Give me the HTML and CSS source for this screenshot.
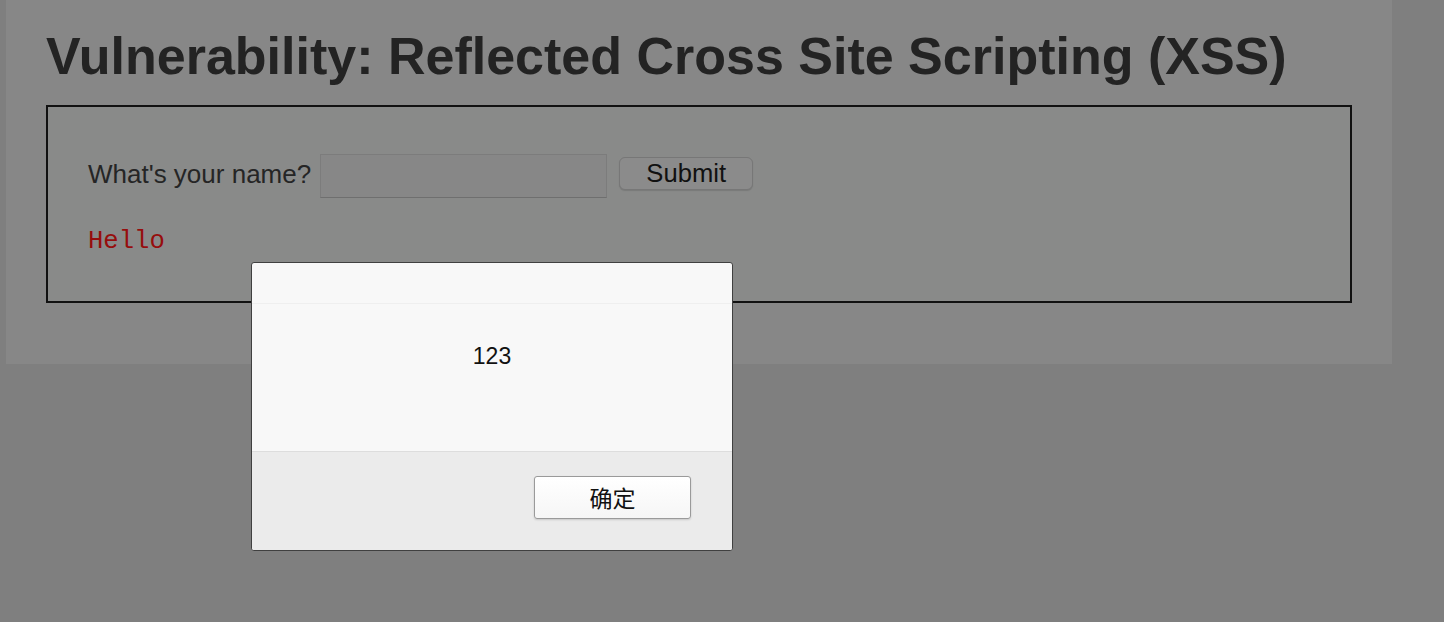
FILE: index.html
```html
<!DOCTYPE html>
<html lang="en">
<head>
<meta charset="utf-8">
<title>Vulnerability: Reflected Cross Site Scripting (XSS)</title>
<link rel="stylesheet" href="styles.css">
</head>
<body>
<div class="page">
  <h1 class="title">Vulnerability: Reflected Cross Site Scripting (XSS)</h1>
  <div class="vulnerable">
    <form class="name-form">
      <label class="name-label" for="name">What's your name?</label>
      <input class="name-input" id="name" type="text">
      <button class="submit-btn" type="button">Submit</button>
    </form>
    <pre class="hello">Hello </pre>
  </div>
</div>
<div class="dialog">
  <div class="dialog-head"></div>
  <div class="dialog-body">123</div>
  <div class="dialog-foot">
    <button class="ok-btn" type="button">确定</button>
  </div>
</div>
</body>
</html>
```
FILE: styles.css
```css
html, body {
  margin: 0;
  padding: 0;
}
body {
  background: #7f7f7f;
  width: 1444px;
  height: 622px;
  overflow: hidden;
  font-family: "Liberation Sans", Arial, sans-serif;
  color: #222;
}
.page {
  margin-left: 6px;
  width: 1386px;
  height: 364px;
  background: #878787;
  padding-top: 31px;
  box-sizing: border-box;
}
.title {
  margin: 0 0 23px 40px;
  font-size: 52px;
  line-height: 51px;
  font-weight: bold;
  color: #232323;
  white-space: nowrap;
}
.vulnerable {
  margin: 0 40px;
  height: 198px;
  box-sizing: border-box;
  border: 2px solid #111;
  background: #898a89;
  padding: 47px 40px 0 40px;
}
.name-form {
  display: flex;
  align-items: center;
  height: 44px;
  margin: 0;
}
.name-label {
  font-size: 26px;
  color: #252525;
  margin-right: 9px;
  margin-top: -3px;
}
.name-input {
  width: 287px;
  height: 44px;
  box-sizing: border-box;
  border: 1px solid #7c7c7c;
  border-bottom-color: #6f6f6f;
  background: #878787;
  margin: 0 12px 0 0;
  padding: 0;
}
.submit-btn {
  width: 134px;
  height: 33px;
  box-sizing: border-box;
  margin-top: -6px;
  border: 1px solid #777;
  border-radius: 6px;
  background: #8b8b8b;
  box-shadow: 0 1px 1px rgba(0,0,0,0.12);
  font-family: "Liberation Sans", Arial, sans-serif;
  font-size: 25.6px;
  line-height: 1;
  color: #111;
  padding: 2px 0 0 0;
}
.hello {
  margin: 29px 0 0 0;
  font-family: "Liberation Mono", "Courier New", monospace;
  font-size: 25.6px;
  line-height: 30px;
  color: #960d0d;
}
.dialog {
  position: absolute;
  left: 251px;
  top: 262px;
  width: 482px;
  height: 289px;
  box-sizing: border-box;
  border: 1px solid #404040;
  border-radius: 3px;
  background: #f8f8f8;
  display: flex;
  flex-direction: column;
  overflow: hidden;
  font-family: "Liberation Sans", "Noto Sans CJK SC", sans-serif;
}
.dialog-head {
  height: 40px;
  border-bottom: 1px solid #efefef;
  flex: none;
}
.dialog-body {
  height: 147px;
  box-sizing: border-box;
  padding-top: 38px;
  text-align: center;
  font-size: 23px;
  line-height: 28px;
  color: #111;
  flex: none;
}
.dialog-foot {
  flex: 1;
  border-top: 1px solid #dddddd;
  background: #ebebeb;
  display: flex;
  justify-content: flex-end;
  align-items: flex-start;
  padding: 24px 41px 0 0;
}
.ok-btn {
  width: 157px;
  height: 43px;
  box-sizing: border-box;
  border: 1px solid #9a9a9a;
  border-radius: 3px;
  background: linear-gradient(#ffffff, #f6f6f6);
  box-shadow: 0 1px 2px rgba(0,0,0,0.15);
  font-family: "Noto Sans CJK SC", "Liberation Sans", sans-serif;
  font-size: 23px;
  line-height: 1;
  color: #111;
  padding: 0;
}
```
